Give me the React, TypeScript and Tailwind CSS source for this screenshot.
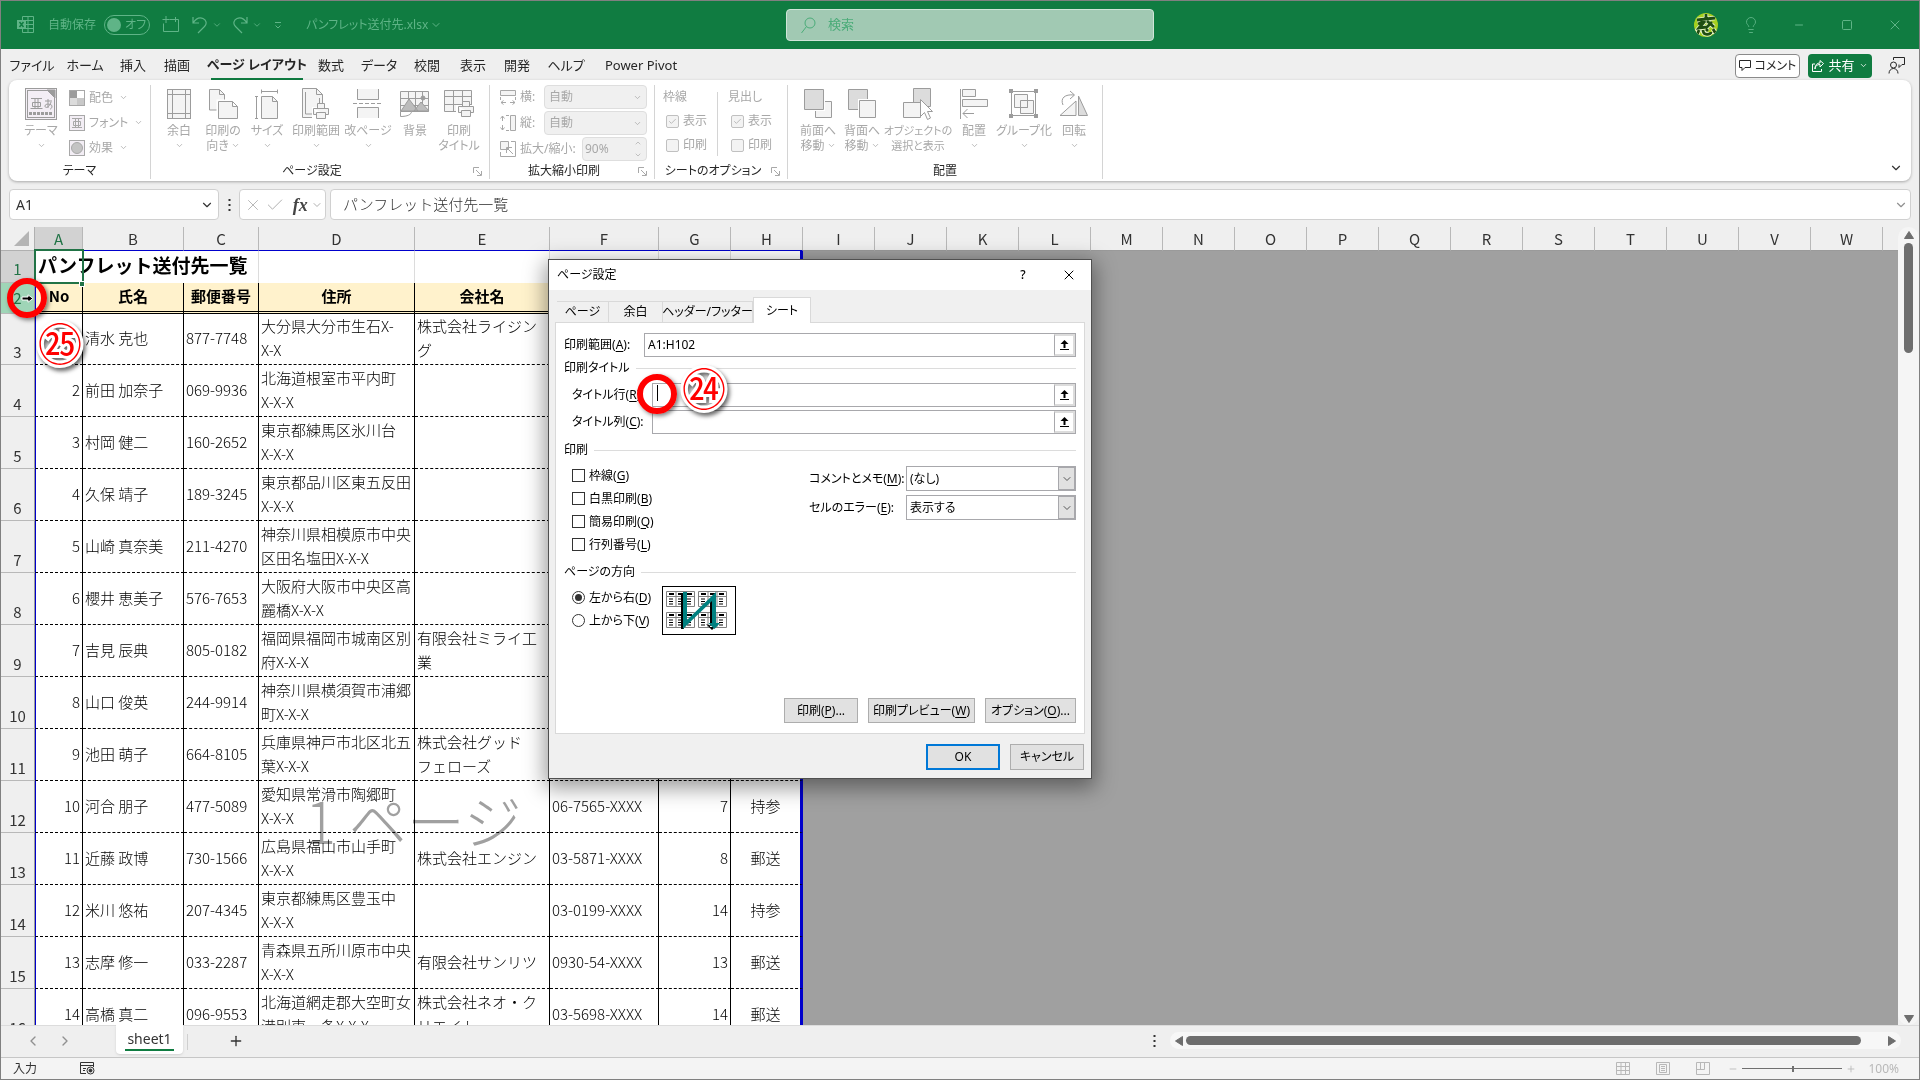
import React from "react";
import { ChevronDown, ChevronLeft, ChevronRight, Lightbulb, Minus, Plus, Square, X, Check } from "lucide-react";

type Kids = { children?: React.ReactNode };

function Ico({ w = 32, h = 32, box, children, className = "" }: Kids & { w?: number; h?: number; box?: string; className?: string }) {
  return (
    <svg width={w} height={h} viewBox={box ?? `0 0 ${w} ${h}`} fill="none" stroke="currentColor" strokeWidth="1" className={"shrink-0 " + className} aria-hidden="true">
      {children}
    </svg>
  );
}

function Chev({ size = 10, className = "" }: { size?: number; className?: string }) {
  return <ChevronDown size={size} strokeWidth={2} className={"shrink-0 " + className} aria-hidden="true" />;
}

/* ---------- Title bar ---------- */

function TitleBar() {
  return (
    <header className="flex h-12 shrink-0 items-center bg-[#107c41] text-[13px] text-[#5fb487]">
      <div className="flex flex-1 items-center pb-px pl-4">
        <Ico w={17} h={17}>
          <path d="M5.5 .5h11v16h-11zM5.5 4.5h11M5.5 8.5h11M5.5 12.5h11M11 .5v16" />
          <path d="M0 4h9v9H0z" fill="#5fb487" stroke="none" />
          <path d="M2.500 6l4 5M6.500 6l-4 5" stroke="#107c41" strokeWidth="1.500" />
        </Ico>
        <span className="ml-3.5 text-xs">自動保存</span>
        <button className="ml-2 flex h-5 w-[46px] items-center rounded-full border border-[#5fb487] pl-0.5 text-xs" aria-label="自動保存 オフ">
          <span className="size-3.5 rounded-full bg-[#5fb487]" />
          <span className="ml-1">オフ</span>
        </button>
        <button className="ml-3" aria-label="新規作成">
          <Ico w={18} h={17}>
            <path d="M7.500 3.500h9v12H1.500v-8M4 0v7M.5 3.500h7M13.500 1v5" />
          </Ico>
        </button>
        <button className="ml-3 flex items-center gap-1" aria-label="元に戻す">
          <Ico w={16} h={18}>
            <path d="M1 1v6h6M1 7C4 2.500 8 1 11 2.500s4.500 5 1.500 8L6 17" strokeWidth="1.200" />
          </Ico>
          <Chev />
        </button>
        <button className="ml-2.5 flex items-center gap-1" aria-label="やり直し">
          <Ico w={16} h={18}>
            <path d="M15 1v6H9M15 7C12 2.500 8 1 5 2.500s-4.500 5-1.500 8L10 17" strokeWidth="1.200" />
          </Ico>
          <Chev />
        </button>
        <button className="ml-3" aria-label="クイック アクセス ツール バーのカスタマイズ">
          <Ico w={8} h={8}>
            <path d="M1 1.500h6M1.500 4.500L4 7l2.500-2.500" />
          </Ico>
        </button>
        <button className="ml-6 flex items-center gap-0.5 text-xs whitespace-nowrap">
          パンフレット送付先.xlsx
          <Chev size={12} />
        </button>
      </div>
      <label className="ml-4 flex h-8 w-[368px] items-center rounded-sm border border-[#cfe5d8] bg-[#a1c9b3] pl-3.5 text-[#4bac79]">
        <Ico w={15} h={17}>
          <circle cx="9" cy="6" r="5" />
          <path d="M5.500 9.500L.5 16" />
        </Ico>
        <input className="ml-3 min-w-0 flex-1 bg-transparent outline-none placeholder:text-[#4bac79]" placeholder="検索" aria-label="検索" />
      </label>
      <div className="flex flex-1 items-center justify-end pr-3">
        <button className="mr-6 size-6 overflow-hidden rounded-full bg-[#a6d01f]" aria-label="アカウント">
          <Ico w={24} h={24}>
            <g stroke="#e8f4cf" strokeWidth="4.500">
              <path d="M3 7l18-2M12 1v4M4 11l7-3-6 7 8-1M13 8l7 6M18 9l-5 5M5 17l-2 5M9 17c0 6 8 5 8 2M12 16l2 2M19 16l3 5" />
            </g>
            <g stroke="#1f4d12" strokeWidth="2.800">
              <path d="M3 7l18-2M12 1v4M4 11l7-3-6 7 8-1M13 8l7 6M18 9l-5 5M5 17l-2 5M9 17c0 6 8 5 8 2M12 16l2 2M19 16l3 5" />
            </g>
          </Ico>
        </button>
        <button className="mr-[33px]" aria-label="ヒント"><Lightbulb size={18} strokeWidth={1.2} /></button>
        <button className="mr-9" aria-label="最小化"><Minus size={12} strokeWidth={2} /></button>
        <button className="mr-[34px]" aria-label="最大化"><Square size={12} strokeWidth={2} /></button>
        <button className="mr-1" aria-label="閉じる"><X size={16} strokeWidth={1.5} /></button>
      </div>
    </header>
  );
}

function TabRow() {
  const tab = "flex h-7 items-center justify-center whitespace-nowrap";
  return (
    <nav className="flex h-[31px] shrink-0 items-center pt-0.5 pl-2.5 text-[13px] text-[#262626]">
      <button className={tab + " w-[42px]"}>ファイル</button>
      <button className={tab + " ml-3 w-[40px]"}>ホーム</button>
      <button className={tab + " ml-3 w-8"}>挿入</button>
      <button className={tab + " ml-3 w-8"}>描画</button>
      <button className={tab + " ml-[18px] w-[92px] border-b-2 border-[#107c41] font-bold"}>ページ レイアウト</button>
      <button className={tab + " ml-3 w-8"}>数式</button>
      <button className={tab + " ml-3.5 w-9"}>データ</button>
      <button className={tab + " ml-3.5 w-8"}>校閲</button>
      <button className={tab + " ml-3.5 w-8"}>表示</button>
      <button className={tab + " ml-3 w-8"}>開発</button>
      <button className={tab + " ml-3.5 w-[38px]"}>ヘルプ</button>
      <button className={tab + " ml-4 w-20"}>Power Pivot</button>
      <div className="ml-auto flex items-center gap-2 pr-3.5">
        <button className="flex h-6 w-[65px] items-center justify-center gap-1 rounded border border-[#8a8a8a] bg-white text-xs">
          <Ico w={12} h={11}>
            <path d="M.5 .5h11v7H6L3 10.500v-3H.5z" />
          </Ico>
          コメント
        </button>
        <button className="flex h-6 w-16 items-center justify-center gap-1 rounded bg-[#107c41] text-[13px] text-white">
          <Ico w={12} h={12}>
            <path d="M3 4H.5v7.500h9V9M3 9c0-3 2-4.500 5-4.500V7l3.500-3.500L8 .5V3C5 3 3 5 3 9z" />
          </Ico>
          共有
          <Chev size={9} />
        </button>
        <button className="ml-2" aria-label="アカウント マネージャー">
          <Ico w={17} h={17}>
            <circle cx="5.500" cy="8" r="3" />
            <path d="M1 16.500c0-3 2-5 4.500-5s4.500 2 4.500 5M5.500 3V.5h11v7H14l-3 3V7.500" />
          </Ico>
        </button>
      </div>
    </nav>
  );
}

/* ---------- Ribbon ---------- */

function Group({ label, launcher, className = "", children }: Kids & { label: string; launcher?: boolean; className?: string }) {
  return (
    <section className={"flex shrink-0 flex-col border-r border-[#d4d4d4] " + className}>
      <div className="flex min-h-0 flex-1">{children}</div>
      <div className="flex h-4 items-center text-xs leading-4 text-[#262626]">
        <span className="flex-1 text-center">{label}</span>
        {launcher && (
          <button className="w-4 text-[#a8a8a8]" aria-label={label + "の詳細"}>
            <Ico w={9} h={9}>
              <path d="M.5 6V.5H6M3 3l5 5M8.500 4v4.500H4" />
            </Ico>
          </button>
        )}
      </div>
    </section>
  );
}

function Big({ lines, chev = "below", className, children }: Kids & { lines: string[]; chev?: "below" | "inline" | "none"; className: string }) {
  return (
    <button className={"flex shrink-0 flex-col items-center leading-[15px] whitespace-nowrap text-[#a8a8a8] " + className}>
      <span className="flex h-[38px] shrink-0 items-center text-[#9c9c9c]">{children}</span>
      {lines.map((l, i) => (
        <span key={l} className="flex items-center gap-0.5">
          {l}
          {chev === "inline" && i === lines.length - 1 && <Chev size={9} />}
        </span>
      ))}
      {chev === "below" && <span className="flex h-[15px] items-center"><Chev size={9} /></span>}
    </button>
  );
}

function Small({ label, children }: Kids & { label: string }) {
  return (
    <button className="flex h-[25px] items-center gap-1 text-xs whitespace-nowrap text-[#a8a8a8]">
      {children}
      {label}
      <Chev size={9} className="ml-0.5" />
    </button>
  );
}

function SheetOption({ title }: { title: string }) {
  return (
    <div className="flex flex-col text-xs text-[#a8a8a8]">
      <span className="flex h-6 items-center">{title}</span>
      {["表示", "印刷"].map((t, i) => (
        <label key={t} className="flex h-6 items-center gap-1 pl-[3px]">
          <span className="relative flex size-[13px] items-center justify-center">
            <input type="checkbox" disabled defaultChecked={i === 0} className="absolute inset-0 appearance-none rounded-xs border border-[#c0c0c0] bg-[#f3f3f3]" />
            {i === 0 && <Check size={9} strokeWidth={2} className="relative" />}
          </span>
          {t}
        </label>
      ))}
    </div>
  );
}

const page = "#f4f4f4";

function Ribbon() {
  return (
    <div className="mx-2 flex h-[101px] shrink-0 rounded-lg bg-white pt-[5px] pb-0.5 text-xs shadow-[0_1px_3px_rgba(0,0,0,0.3)]">
      <Group label="テーマ" className="w-[142px]">
        <Big lines={["テーマ"]} className="ml-2 w-12">
          <Ico>
            <rect x=".5" y=".5" width="31" height="31" fill="#f3eef5" />
            <rect x="2.500" y="2.500" width="27" height="27" />
            <path d="M22 2h8v8z" fill="#9c9c9c" />
            <path d="M6 10.500h11M7.500 14.500h8v4h-8zM10 10.500v10M13 10.500v10M5.500 20.500h12" />
            <path d="M20 13h7M23 11v9M26 14c-1 5-6 7-6 4s7-2 7 0-1 3-2 3" />
            <path d="M4 25.500h24" strokeWidth="3" strokeDasharray="3 1" />
          </Ico>
        </Big>
        <div className="ml-1 flex flex-col">
          <Small label="配色">
            <Ico w={16} h={16}>
              <path d="M0 0h8v8H0z" fill="#9c9c9c" stroke="none" />
              <path d="M8 8h7v7H8z" fill="#c8c8c8" stroke="none" />
              <path d="M0 8h8v8H0z" fill="#dcdcdc" stroke="none" />
              <rect x=".5" y=".5" width="15" height="15" />
            </Ico>
          </Small>
          <Small label="フォント">
            <Ico w={16} h={16}>
              <rect x=".5" y=".5" width="15" height="15" fill="#f3eef5" />
              <path d="M3 3.500h10M4.500 6.500h7v4h-7zM6.500 3.500v9M9.500 3.500v9M3 12.500h10" />
            </Ico>
          </Small>
          <Small label="効果">
            <Ico w={16} h={16}>
              <rect x=".5" y=".5" width="15" height="15" fill="#f3eef5" />
              <circle cx="8" cy="8" r="5.500" fill="#c4c4c4" />
            </Ico>
          </Small>
        </div>
      </Group>

      <Group label="ページ設定" launcher className="w-[339px]">
        <Big lines={["余白"]} className="ml-1.5 w-11">
          <Ico w={24} h={30}>
            <rect x=".5" y=".5" width="23" height="29" fill={page} />
            <path d="M5.500 0v30M18.500 0v30M0 5.500h24M0 24.500h24" />
          </Ico>
        </Big>
        <Big lines={["印刷の", "向き"]} chev="inline" className="w-11">
          <Ico w={29} h={30}>
            <path d="M.5 .5h10l5 5V21H.5z" fill={page} />
            <path d="M10.500 .5v5h5" />
            <path d="M9.500 12.500h14l5 5v12h-19z" fill={page} stroke="#fff" strokeWidth="4" />
            <path d="M9.500 12.500h14l5 5v12h-19zM23.500 12.500v5h5" fill={page} />
          </Ico>
        </Big>
        <Big lines={["サイズ"]} className="w-11">
          <Ico w={24} h={30}>
            <path d="M6.500 7.500h11l5 5v17h-16z" fill={page} />
            <path d="M17.500 7.500v5h5M6.500 2.500h16M6.500 .5v4M22.500 .5v4M1.500 7.500v22M0 7.500h3M0 29.500h3" />
          </Ico>
        </Big>
        <Big lines={["印刷範囲"]} className="w-[54px]">
          <Ico w={29} h={32}>
            <path d="M.5 .5h14l6 6v23H.5z" fill={page} />
            <path d="M14.500 .5v6h6M3.500 4v22h14V10" />
            <path d="M10 19h18v12H10z" fill="#fff" stroke="none" />
            <path d="M15.500 20.500v-5h7v5M11.500 20.500h15v6h-3M14.500 26.500h-3v-6M14.500 24.500h9v6h-9z" fill={page} />
          </Ico>
        </Big>
        <Big lines={["改ページ"]} className="w-[50px]">
          <Ico w={30} h={30}>
            <path d="M4.500 0v10.500h21V0M4.500 29V18.500h21V29" fill={page} />
            <path d="M0 14.500h30" strokeDasharray="4 2" />
          </Ico>
        </Big>
        <Big lines={["背景"]} chev="none" className="w-11">
          <Ico w={30} h={28}>
            <path d="M.5 1.500h28v20H.5z" fill={page} />
            <path d="M0 8.500h29M0 15.500h29M8.500 1v20M15.500 1v20M22.500 1v20" />
            <path d="M1 21L9 9l9 12zM14 21l7-9 8 9z" fill="#bcbcbc" />
            <circle cx="23" cy="8" r="2" fill="#9c9c9c" />
            <path d="M.5 21.500h11c0 3-4 5-11 5z" fill="#fff" />
          </Ico>
        </Big>
        <Big lines={["印刷", "タイトル"]} chev="none" className="w-11">
          <Ico w={31} h={28}>
            <path d="M.5 .5h27v21H.5zM.5 6.500h27M.5 14.500h27M9.500 .5v21M18.500 .5v21" fill={page} />
            <path d="M12 15h19v13H12z" fill="#fff" stroke="none" />
            <path d="M18.500 16.500v-5h7v5M14.500 16.500h15v6h-3M17.500 22.500h-3v-6M17.500 20.500h9v6h-9z" fill={page} />
          </Ico>
        </Big>
      </Group>

      <Group label="拡大縮小印刷" launcher className="w-[165px]">
        <div className="ml-2.5 flex w-[147px] flex-col gap-0.5 text-[#a8a8a8]">
          {["横:", "縦:"].map((l, i) => (
            <div key={l} className="flex h-6 items-center">
              {i === 0 ? (
                <Ico w={16} h={17}>
                  <path d="M.5 1.500h15v5H.5z" fill={page} />
                  <path d="M.5 8v3M15.500 8v3M1 13.500h5M10 13.500h5M3.500 11.500l-2.500 2 2.500 2M12.500 11.500l2.500 2-2.500 2" />
                </Ico>
              ) : (
                <Ico w={16} h={17}>
                  <path d="M10.500 .5h5v15h-5z" fill={page} />
                  <path d="M9 .5H6M9 15.500H6M2.500 1v5M2.500 10v5M.5 3.500l2-2.500 2 2.500M.5 12.500l2 2.500 2-2.500" />
                </Ico>
              )}
              <label htmlFor={"fit" + i} className="ml-1">{l}</label>
              <span className="relative ml-auto flex h-6 w-[103px] items-center rounded border border-[#dedede] bg-[#f0f0f0]">
                <select id={"fit" + i} disabled className="h-full w-full appearance-none bg-transparent pl-1 opacity-100">
                  <option>自動</option>
                </select>
                <Chev size={9} className="absolute right-1" />
              </span>
            </div>
          ))}
          <div className="flex h-6 items-center whitespace-nowrap">
            <Ico w={16} h={16}>
              <path d="M.5 .5h8v8h-8z" fill={page} />
              <path d="M11 .5h4.500v15H.5V11M13 13L7 7M6.500 12V6.500H12" />
            </Ico>
            <label htmlFor="scale" className="ml-1">拡大/縮小:</label>
            <span className="ml-auto flex h-6 w-[65px] items-center justify-between rounded border border-[#dedede] bg-[#f0f0f0] pr-1 pl-0.5">
              <input id="scale" disabled defaultValue="90%" className="w-9 bg-transparent" />
              <span className="flex flex-col gap-1">
                <Chev size={8} className="rotate-180" />
                <Chev size={8} />
              </span>
            </span>
          </div>
        </div>
      </Group>

      <Group label="シートのオプション" launcher className="w-[133px]">
        <div className="ml-2 flex">
          <SheetOption title="枠線" />
          <div className="mx-2.5 h-16 w-px self-center bg-[#d4d4d4]" />
          <SheetOption title="見出し" />
        </div>
      </Group>

      <Group label="配置" className="w-[315px]">
        <Big lines={["前面へ", "移動"]} chev="inline" className="ml-2 w-11">
          <Ico w={29} h={30}>
            <path d="M11.500 12.500h16v16h-16z" fill={page} />
            <path d="M.5 .5h19v20H.5z" fill="#dcdcdc" stroke="#fff" strokeWidth="3" />
            <path d="M.5 .5h19v20H.5z" fill="#dcdcdc" />
          </Ico>
        </Big>
        <Big lines={["背面へ", "移動"]} chev="inline" className="w-11">
          <Ico w={29} h={30}>
            <path d="M.5 .5h19v20H.5z" fill="#dcdcdc" />
            <path d="M11.500 11.500h16v17h-16z" fill={page} stroke="#fff" strokeWidth="3" />
            <path d="M11.500 11.500h16v17h-16z" fill={page} />
          </Ico>
        </Big>
        <Big lines={["オブジェクトの", "選択と表示"]} chev="none" className="w-[68px] text-[11px]">
          <Ico w={30} h={32}>
            <path d="M10.500 .5h17v18h-17z" fill="#dcdcdc" />
            <path d="M.5 14.500h17v15H.5z" fill={page} />
            <path d="M17.500 11.500v17l4-4 3 7 3-1.500-3-6.500h5z" fill="#fff" />
          </Ico>
        </Big>
        <Big lines={["配置"]} className="w-11">
          <Ico w={28} h={30}>
            <path d="M.5 0v30" />
            <path d="M2.500 .5h13v7h-13zM2.500 10.500h25v7h-25z" fill={page} />
            <path d="M3 24.500h11M7.500 20L3 24.500 7.500 29" />
          </Ico>
        </Big>
        <Big lines={["グループ化"]} className="w-[56px]">
          <Ico w={30} h={30}>
            <path d="M2.500 2.500h24v24h-24z" />
            <path d="M5.500 5.500h13v13h-13zM11.500 11.500h13v13h-13z" fill={page} />
            <path d="M18.500 11v7.500H11" />
            <g fill="#9c9c9c" stroke="none">
              <path d="M0 0h4v4H0zM25 0h4v4h-4zM0 25h4v4H0zM25 25h4v4h-4z" />
            </g>
          </Ico>
        </Big>
        <Big lines={["回転"]} className="w-11">
          <Ico w={30} h={28}>
            <path d="M1 25.500L17 11v14.500z" fill={page} />
            <path d="M19.500 6l9 19.500h-9z" fill="#dcdcdc" />
            <path d="M4 15C1 8 6 4 15 5M11 1l4.500 4L11 9" />
          </Ico>
        </Big>
      </Group>
      <button className="mt-auto mr-2 mb-1 ml-auto text-[#333]" aria-label="リボンを折りたたむ">
        <Chev size={14} />
      </button>
    </div>
  );
}

/* ---------- Formula bar ---------- */

function FormulaBar() {
  const box = "flex h-[31px] items-center rounded border border-[#d0d0d0] bg-white";
  return (
    <div className="mt-2 mb-[7px] flex shrink-0 items-center pr-2 pl-2 text-sm text-[#333]">
      <div className={box + " w-[210px] pr-1"}>
        <input className="w-full min-w-0 pl-1.5 outline-none" defaultValue="A1" aria-label="名前ボックス" />
        <Chev size={14} />
      </div>
      <span className="flex w-5 justify-center">
        <Ico w={3} h={12}>
          <path d="M1.500 0v12" strokeWidth="2" strokeDasharray="2 3" />
        </Ico>
      </span>
      <div className={box + " w-[87px] justify-between pr-0.5 pl-1 text-[#b0b0b0]"}>
        <button aria-label="キャンセル"><X size={18} strokeWidth={1.2} /></button>
        <button aria-label="入力"><Check size={20} strokeWidth={1.2} /></button>
        <button className="pl-1 font-['Liberation_Serif',serif] text-lg leading-none font-bold text-[#444] italic" aria-label="関数の挿入">fx</button>
        <Chev size={12} />
      </div>
      <div className={box + " ml-1 flex-1 pr-0.5"}>
        <input className="min-w-0 flex-1 pb-0.5 pl-3 font-['Noto_Sans_CJK_JP',sans-serif] text-[15px] font-light outline-none [font-feature-settings:normal]" defaultValue="パンフレット送付先一覧" aria-label="数式バー" />
        <Chev size={14} className="text-[#909090]" />
      </div>
    </div>
  );
}

/* ---------- Grid ---------- */

type Row = [string, string, string, string, string, string, string];

const rows: Row[] = [
  ["清水 克也", "877-7748", "大分県大分市生石X-|X-X", "株式会社ライジン|グ", "", "", ""],
  ["前田 加奈子", "069-9936", "北海道根室市平内町|X-X-X", "", "", "", ""],
  ["村岡 健二", "160-2652", "東京都練馬区氷川台|X-X-X", "", "", "", ""],
  ["久保 靖子", "189-3245", "東京都品川区東五反田|X-X-X", "", "", "", ""],
  ["山崎 真奈美", "211-4270", "神奈川県相模原市中央|区田名塩田X-X-X", "", "", "", ""],
  ["櫻井 恵美子", "576-7653", "大阪府大阪市中央区高|麗橋X-X-X", "", "", "", ""],
  ["吉見 辰典", "805-0182", "福岡県福岡市城南区別|府X-X-X", "有限会社ミライ工|業", "", "", ""],
  ["山口 俊英", "244-9914", "神奈川県横須賀市浦郷|町X-X-X", "", "", "", ""],
  ["池田 萌子", "664-8105", "兵庫県神戸市北区北五|葉X-X-X", "株式会社グッド|フェローズ", "", "", ""],
  ["河合 朋子", "477-5089", "愛知県常滑市陶郷町|X-X-X", "", "06-7565-XXXX", "7", "持参"],
  ["近藤 政博", "730-1566", "広島県福山市山手町|X-X-X", "株式会社エンジン", "03-5871-XXXX", "8", "郵送"],
  ["米川 悠祐", "207-4345", "東京都練馬区豊玉中|X-X-X", "", "03-0199-XXXX", "14", "持参"],
  ["志摩 修一", "033-2287", "青森県五所川原市中央|X-X-X", "有限会社サンリツ", "0930-54-XXXX", "13", "郵送"],
  ["高橋 真二", "096-9553", "北海道網走郡大空町女|満別東一条X-X-X", "株式会社ネオ・ク|リエイト", "03-5698-XXXX", "14", "郵送"],
];

const letters = "ABCDEFGHIJKLMNOPQRSTUVW".split("");
const heads = ["No", "氏名", "郵便番号", "住所", "会社名", "", "", ""];

function Lines({ text }: { text: string }) {
  return (
    <>
      {text.split("|").map((l) => (
        <span key={l} className="block">{l}</span>
      ))}
    </>
  );
}

function Sheet() {
  const rh = "border-r border-b border-r-[#9a9a9a] border-b-[#b8b8b8] bg-[#efefef] p-0 text-center font-normal text-[#333]";
  const cell = "border-r border-b border-r-black border-b-black [border-bottom-style:dashed] p-0 pb-0.5 whitespace-nowrap";
  return (
    <table className="w-full table-fixed border-separate border-spacing-0 bg-white font-['Noto_Sans_CJK_JP',sans-serif] text-[15px] leading-6 font-light text-black [font-feature-settings:normal]">
      <colgroup>
        <col className="w-[34px]" />
        <col className="w-12" />
        <col className="w-[101px]" />
        <col className="w-[75px]" />
        <col className="w-[156px]" />
        <col className="w-[135px]" />
        <col className="w-[109px]" />
        <col className="w-[72px]" />
        <col className="w-[72px]" />
        {letters.slice(8).map((l) => (
          <col key={l} className="w-[72px]" />
        ))}
        <col />
      </colgroup>
      <thead>
        <tr className="h-6 leading-[22px]">
          <th className="border-r border-b border-[#b0b0b0] bg-[#efefef] p-0">
            <Ico w={17} h={17} className="ml-auto mr-1">
              <path d="M16 1v15H1z" fill="#b4b4b4" stroke="none" />
            </Ico>
          </th>
          {letters.map((l, i) => (
            <th key={l} scope="col" className={"border-r border-b border-r-[#b8b8b8] p-0 text-center font-normal " + (i === 0 ? "border-b-[#217346] bg-[#d2d2d2] text-[#217346]" : i < 8 ? "border-b-[#0000cc] bg-[#efefef] text-[#333]" : "border-b-[#9a9a9a] bg-[#efefef] text-[#333]")}>
              {l}
            </th>
          ))}
          <th className="border-b border-b-[#9a9a9a] bg-[#efefef] p-0" />
        </tr>
      </thead>
      <tbody>
        <tr className="h-8">
          <th scope="row" className="border-r border-b border-r-[#9a9a9a] border-b-[#b8b8b8] bg-[#d2d2d2] p-0 pt-1 text-center font-normal text-[#217346]">1</th>
          <td className="relative p-0 pb-1 pl-[3px] text-[19px] font-bold whitespace-nowrap">
            パンフレット送付先一覧
            <span className="absolute -top-0.5 -right-px -bottom-px -left-px border-2 border-[#217346]" />
            <span className="absolute -right-0.5 -bottom-1 size-1.5 border border-white bg-[#217346]" />
          </td>
          <td className="p-0" />
          <td className="border-r border-[#dcdcdc] p-0" />
          <td className="border-r border-[#dcdcdc] p-0" />
          <td className="border-r border-[#dcdcdc] p-0" />
          <td className="border-r border-[#dcdcdc] p-0" />
          <td className="border-r border-[#dcdcdc] p-0" />
          <td className="border-r-3 border-[#0000cc] p-0" />
          <td colSpan={16} rowSpan={rows.length + 2} className="bg-[#a0a0a0] p-0" />
        </tr>
        <tr className="h-[31px]">
          <th scope="row" className="border-r border-b border-r-[#9a9a9a] border-b-[#b8b8b8] bg-[#9fd5b7] p-0 text-center font-normal text-[#217346]">2</th>
          {heads.map((h, i) => (
            <td key={i} className={"border-b-3 border-black [border-bottom-style:double] bg-[#fff2cc] p-0 pb-0.5 text-center font-bold " + (i === 0 ? "border-r border-l border-l-[#0000cc]" : i === 7 ? "border-r-3 border-r-[#0000cc]" : "border-r")}>
              {h}
            </td>
          ))}
        </tr>
        {rows.map((r, i) => (
          <tr key={r[0]} className={i === 0 ? "h-[51px]" : "h-[52px]"}>
            <th scope="row" className={rh + " align-bottom"}>{i + 3}</th>
            <td className={cell + " border-l border-l-[#0000cc] pr-0.5 text-right"}>{i + 1}</td>
            <td className={cell + " pl-0.5"}>{r[0]}</td>
            <td className={cell + " pl-0.5"}>{r[1]}</td>
            <td className={cell + " pl-0.5"}><Lines text={r[2]} /></td>
            <td className={cell + " pl-0.5"}><Lines text={r[3]} /></td>
            <td className={cell + " pl-0.5"}>{r[4]}</td>
            <td className={cell + " pr-0.5 text-right"}>{r[5]}</td>
            <td className="border-r-3 border-b border-r-[#0000cc] border-b-black [border-bottom-style:dashed] p-0 pb-0.5 text-center">{r[6]}</td>
          </tr>
        ))}
      </tbody>
    </table>
  );
}

function Tri({ className = "" }: { className?: string }) {
  return (
    <Ico w={10} h={8} className={className}>
      <path d="M5 .5L9.500 7.500h-9z" fill="#6e6e6e" stroke="#6e6e6e" strokeLinejoin="round" />
    </Ico>
  );
}

function GridArea() {
  return (
    <main className="relative flex min-h-0 flex-1">
      <div className="h-full min-w-0 flex-1 overflow-hidden">
        <Sheet />
        <p className="absolute top-[562px] left-[304px] font-['Noto_Sans_CJK_JP',sans-serif] text-[58px] leading-[60px] font-light whitespace-nowrap text-[#a0a0a0] mix-blend-multiply [font-feature-settings:normal]">1 ページ</p>
      </div>
      <div className="flex w-[21px] shrink-0 flex-col items-center rounded-full bg-[#f5f5f5] pt-1 pb-0.5">
        <Tri />
        <div className="mt-1 h-[110px] w-[9px] rounded-full bg-[#6e6e6e]" />
        <Tri className="mt-auto rotate-180" />
      </div>
    </main>
  );
}

/* ---------- Bottom bars ---------- */

function SheetBar() {
  return (
    <div className="flex h-8 shrink-0 items-start border-t border-[#dcdcdc] text-[#333]">
      <button className="mt-[7px] ml-6 text-[#909090]" aria-label="前のシート"><ChevronLeft size={16} strokeWidth={2} /></button>
      <button className="mt-[7px] ml-4 text-[#909090]" aria-label="次のシート"><ChevronRight size={16} strokeWidth={2} /></button>
      <button className="-mt-px ml-[43px] flex h-[29px] w-[67px] items-start justify-center rounded-b bg-white shadow-sm">
        <span className="mt-1 border-b-2 border-[#107c41] px-0.5 text-sm leading-5">sheet1</span>
      </button>
      <span className="mt-2 ml-1 h-4 w-px bg-[#cfcfcf]" />
      <button className="mt-[7px] ml-10" aria-label="新しいシート"><Plus size={16} strokeWidth={2} /></button>
      <div className="mt-1.5 mr-[18px] ml-auto flex w-[39%] items-center">
        <Ico w={3} h={12}>
          <path d="M1.500 0v12" strokeWidth="2" strokeDasharray="2 3" />
        </Ico>
        <div className="ml-3.5 flex h-[17px] flex-1 items-center rounded-full bg-[#f7f7f7] px-1">
          <Tri className="-rotate-90" />
          <div className="mr-[26px] ml-0.5 h-[9px] flex-1 rounded-full bg-[#6e6e6e]" />
          <Tri className="rotate-90" />
        </div>
      </div>
    </div>
  );
}

function StatusBar() {
  return (
    <footer className="flex h-[22px] shrink-0 items-center border-t border-[#c6c6c6] bg-[#f4f4f4] pl-3 text-xs text-[#333]">
      入力
      <button className="ml-[43px]" aria-label="マクロの記録">
        <Ico w={15} h={13}>
          <path d="M6 11.500H.5V.5h13V5M.5 3.500h13M3 6.500h3M3 8.500h2" />
          <circle cx="10.500" cy="8.500" r="3.500" />
          <circle cx="10.500" cy="8.500" r="1.500" fill="currentColor" />
        </Ico>
      </button>
      <div className="ml-auto flex items-center text-[#b8b8b8]">
        <button className="mr-[26px]" aria-label="標準">
          <Ico w={14} h={13}><path d="M.5 .5h13v12H.5zM5 .5v12M9.500 .5v12M.5 4.500h13M.5 8.500h13" /></Ico>
        </button>
        <button className="mr-[26px]" aria-label="ページ レイアウト">
          <Ico w={14} h={13}><path d="M.5 .5h13v12H.5zM3.500 2.500h7v8h-7zM5 4.500h4M5 6.500h4M5 8.500h4" /></Ico>
        </button>
        <button className="mr-[18px]" aria-label="改ページ プレビュー">
          <Ico w={14} h={13}><path d="M.5 .5h13v12H.5zM.5 7.500h8v-7M4.500 .5v7" /></Ico>
        </button>
        <button aria-label="縮小"><Minus size={10} strokeWidth={2} /></button>
        <div className="relative mx-1 flex h-3.5 w-[100px] items-center" role="presentation">
          <span className="h-px w-full bg-[#707070]" />
          <span className="absolute left-1/2 h-1.5 w-0.5 bg-[#707070]" />
        </div>
        <button aria-label="拡大"><Plus size={10} strokeWidth={2} /></button>
        <span className="mr-5 ml-3">100%</span>
      </div>
    </footer>
  );
}

/* ---------- Page setup dialog ---------- */

function Key({ text, k, tail = "" }: { text: string; k: string; tail?: string }) {
  return (
    <span className="whitespace-nowrap">
      {text}(<u className="underline-offset-2">{k}</u>){tail}
    </span>
  );
}

function Legend({ children, className = "" }: Kids & { className?: string }) {
  return (
    <div className={"flex h-5 items-center gap-1.5 " + className}>
      <span>{children}</span>
      <span className="h-px flex-1 bg-[#dcdcdc]" />
    </div>
  );
}

function RangeField({ id, text, k, value, className }: { id: string; text: string; k: string; value: string; className: string }) {
  return (
    <div className={"flex h-6 items-center " + className}>
      <label htmlFor={id} className="flex-1"><Key text={text} k={k} tail=":" /></label>
      <div className={"flex h-6 border border-[#a8a8ac] " + (value ? "w-[432px]" : "w-[424px]")}>
        <input id={id} defaultValue={value} className="min-w-0 flex-1 pl-[3px] outline-none" />
        <button className="flex w-[21px] items-center justify-center border-2 border-l border-[#dcdcdc] border-l-[#a8a8ac] bg-white" aria-label={text + "の選択"}>
          <Ico w={9} h={10}>
            <path d="M4.500 8V2" strokeWidth="2" stroke="#000" />
            <path d="M4.500 0L8.500 4h-8z" fill="#000" stroke="none" />
            <path d="M0 9.500h9" stroke="#000" />
          </Ico>
        </button>
      </div>
    </div>
  );
}

function Combo({ id, text, k, value }: { id: string; text: string; k: string; value: string }) {
  return (
    <div className="flex h-[25px] items-center">
      <label htmlFor={id} className="w-[97px]"><Key text={text} k={k} tail=":" /></label>
      <span className="relative flex h-[25px] w-[170px] border border-[#a8a8ac]">
        <select id={id} className="w-full appearance-none bg-white pl-[3px] outline-none">
          <option>{value}</option>
        </select>
        <span className="pointer-events-none absolute inset-y-0 right-0 flex w-[17px] items-center justify-center border border-[#a8a8ac] bg-[#e1e1e1] text-[#555]">
          <Chev size={12} />
        </span>
      </span>
    </div>
  );
}

const mini = "M.5 .5h28v15H.5zM.5 5.500h28M10 .5v15M19 .5v15";
const spots = [[4, 5], [36, 5], [4, 26], [36, 26]];

function OrderPreview() {
  return (
    <Ico w={74} h={49} className="ml-[11px]">
      <rect x=".5" y=".5" width="73" height="48" fill="#fff" stroke="#000" />
      {spots.map(([x, y]) => (
        <g key={x + "-" + y} transform={`translate(${x} ${y})`}>
          <path d={mini} stroke="#808080" />
          <path d="M3 3h5M12 3h5M21 3h5" stroke="#000" strokeWidth="2" />
          <path d="M3 8h4M3 10.500h4M3 13h4M12 8h4M12 10.500h4M12 13h4M21 8h4M21 10.500h4M21 13h4" stroke="#000" />
        </g>
      ))}
      <path d="M19 8h3v35h-3zM48 14h3v27h-3zM44 38l6 6 3-3z" fill="#000" stroke="none" />
      <path d="M21 6h4v28L54 6v31h4l-5.500 6-6-6H50V15L24 40l-3 3z" fill="#008080" stroke="none" />
    </Ico>
  );
}

function Dialog() {
  const tab = "flex h-[21px] items-center justify-center border-t border-r border-[#d9d9d9] whitespace-nowrap";
  const btn = "flex h-[25px] items-center justify-center border border-[#adadad] bg-[#e1e1e1] whitespace-nowrap";
  return (
    <div role="dialog" aria-label="ページ設定" className="absolute top-[258px] left-[547px] w-[544px] border border-[#505050] bg-[#f0f0f0] text-xs leading-4 text-black shadow-[0_6px_20px_3px_rgba(0,0,0,0.4)]">
      <div className="flex h-[30px] items-center bg-white pl-2">
        <span className="flex-1">ページ設定</span>
        <button className="mr-[30px] w-4 font-medium" aria-label="ヘルプ">?</button>
        <button className="mr-3.5" aria-label="閉じる"><X size={16} strokeWidth={1.5} /></button>
      </div>
      <div className="flex h-8 items-end pl-2">
        <button className={tab + " w-[52px]"}>ページ</button>
        <button className={tab + " w-[54px]"}>余白</button>
        <button className={tab + " w-[90px]"}>ヘッダー/フッター</button>
        <button className="-mb-px flex h-[26px] w-[58px] items-center justify-center border border-b-0 border-[#d9d9d9] bg-white">シート</button>
      </div>
      <div className="mx-1.5 border border-[#d9d9d9] bg-white pt-2.5 pr-2 pb-2.5 pl-2">
        <RangeField id="area" text="印刷範囲" k="A" value="A1:H102" className="" />
        <Legend className="mt-px">印刷タイトル</Legend>
        <RangeField id="trow" text="タイトル行" k="R" value="" className="mt-[5px] pl-2" />
        <RangeField id="tcol" text="タイトル列" k="C" value="" className="mt-[3px] pl-2" />
        <Legend className="mt-1.5">印刷</Legend>
        <div className="mt-1 flex justify-between pl-2">
          <div>
            {[["枠線", "G"], ["白黒印刷", "B"], ["簡易印刷", "Q"], ["行列番号", "L"]].map(([t, k]) => (
              <label key={k} className="flex h-[23px] items-center gap-1">
                <input type="checkbox" className="size-[13px] appearance-none border border-[#333] bg-white" />
                <Key text={t} k={k} />
              </label>
            ))}
          </div>
          <div className="mt-0.5 flex flex-col gap-1">
            <Combo id="comments" text="コメントとメモ" k="M" value="(なし)" />
            <Combo id="errors" text="セルのエラー" k="E" value="表示する" />
          </div>
        </div>
        <Legend className="mt-1.5">ページの方向</Legend>
        <div className="mt-1 flex pl-2">
          <div>
            {[["左から右", "D"], ["上から下", "V"]].map(([t, k], i) => (
              <label key={k} className="flex h-[23px] items-center gap-1">
                <span className="relative flex size-[13px] items-center justify-center">
                  <input type="radio" name="order" defaultChecked={i === 0} className="absolute inset-0 appearance-none rounded-full border border-[#333] bg-white" />
                  {i === 0 && <span className="relative size-[7px] rounded-full bg-[#333]" />}
                </span>
                <Key text={t} k={k} />
              </label>
            ))}
          </div>
          <OrderPreview />
        </div>
        <div className="mt-[63px] flex justify-end gap-2.5">
          <button className={btn + " w-[74px]"}><Key text="印刷" k="P" tail="..." /></button>
          <button className={btn + " w-[107px]"}><Key text="印刷プレビュー" k="W" /></button>
          <button className={btn + " w-[91px]"}><Key text="オプション" k="O" tail="..." /></button>
        </div>
      </div>
      <div className="flex justify-end gap-2.5 pt-2.5 pr-[7px] pb-2">
        <button className="h-[26px] w-[74px] border-2 border-[#0078d7] bg-[#e1e1e1]">OK</button>
        <button className="h-[26px] w-[74px] border border-[#adadad] bg-[#e1e1e1]">キャンセル</button>
      </div>
    </div>
  );
}

/* ---------- Step annotations ---------- */

function Step({ mark, className }: { mark: string; className: string }) {
  return (
    <span className={"absolute flex size-12 items-center justify-center font-['Noto_Sans_CJK_JP',sans-serif] text-[44px] leading-none text-[#ff0000] [paint-order:stroke_fill] [-webkit-text-stroke:6px_white] [filter:drop-shadow(2px_3px_2px_rgba(0,0,0,0.6))] " + className}>
      {mark}
    </span>
  );
}

const ring = "absolute size-10 rounded-full border-6 border-[#ff0000] shadow-[2px_2px_4px_rgba(0,0,0,0.5)]";

export default function App() {
  return (
    <div className="relative flex h-screen flex-col overflow-hidden border border-[#808080] bg-[#efefef] font-['Noto_Sans','Noto_Sans_CJK_JP',sans-serif] [font-feature-settings:'palt']">
      <TitleBar />
      <TabRow />
      <Ribbon />
      <FormulaBar />
      <GridArea />
      <SheetBar />
      <StatusBar />
      <Dialog />
      <span className="absolute top-[384px] left-[656px] h-4 w-px bg-black" />
      <span className={ring + " top-[373px] left-[636px]"} />
      <span className={ring + " top-[277px] left-[6px]"} />
      <Ico w={13} h={9} className="absolute top-[293px] left-[20px]">
        <path d="M1 3h6V.8L12 4.500 7 8.200V6H1z" fill="#000" stroke="#fff" />
      </Ico>
      <Step mark="㉔" className="top-[362px] left-[679px]" />
      <Step mark="㉕" className="top-[317px] left-[35px]" />
    </div>
  );
}
